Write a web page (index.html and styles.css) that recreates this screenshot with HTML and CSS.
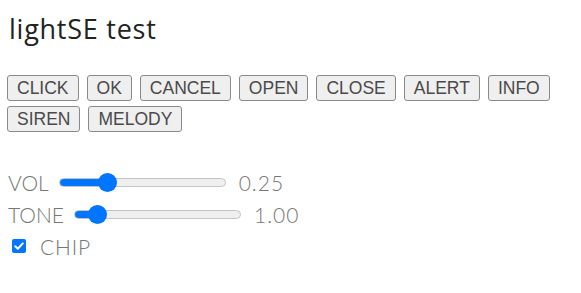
FILE: index.html
```html
<!DOCTYPE html>
<html>
<head>
<meta charset="utf-8">
<link rel="stylesheet" href="styles.css">
</head>
<body>
<h1 class="title">lightSE test</h1>
<div class="buttons">
  <button class="btn">CLICK</button>
  <button class="btn">OK</button>
  <button class="btn">CANCEL</button>
  <button class="btn">OPEN</button>
  <button class="btn">CLOSE</button>
  <button class="btn">ALERT</button>
  <button class="btn">INFO</button>
  <button class="btn">SIREN</button>
  <button class="btn">MELODY</button>
</div>
<div class="controls">
  <label class="row">
    <span class="lbl">VOL</span>
    <input class="slider" type="range" min="0" max="1" step="0.01" value="0.26" style="--p:26%">
    <span class="val">0.25</span>
  </label>
  <label class="row">
    <span class="lbl">TONE</span>
    <input class="slider" type="range" min="0" max="1" step="0.01" value="0.09" style="--p:9%">
    <span class="val">1.00</span>
  </label>
  <label class="row chip">
    <span class="box"><svg viewBox="0 0 14 14" width="14" height="14"><path d="M3.2 7.2 L5.8 9.8 L10.8 4.4" fill="none" stroke="#fff" stroke-width="2" stroke-linecap="round" stroke-linejoin="round"/></svg></span>
    <span class="lbl chip-text">CHIP</span>
  </label>
</div>
</body>
</html>
```

FILE: styles.css
```css
html, body {
  margin: 0;
  padding: 0;
  background: #fff;
}
body {
  padding: 0 10px 0 7px;
}
.title {
  margin: 0;
  padding: 12px 0 0 2px;
  font-family: "Open Sans", "Noto Sans", sans-serif;
  font-weight: 400;
  font-size: 27px;
  line-height: 34px;
  letter-spacing: 0.75px;
  color: #222;
}
.buttons {
  display: flex;
  flex-wrap: wrap;
  gap: 5px 8px;
  margin-top: 29px;
  width: 560px;
}
.btn {
  font-family: "Liberation Sans", Arial, sans-serif;
  font-size: 17.5px;
  color: #4a4a4a;
  background: #efefef;
  border: 1.25px solid #8a8a8a;
  border-radius: 3px;
  height: 26px;
  padding: 0 9px;
  line-height: 22px;
}
.controls {
  margin-top: 34px;
  display: flex;
  flex-direction: column;
  padding-left: 1px;
}
.row {
  display: flex;
  align-items: center;
  height: 32px;
  gap: 10px;
}
.lbl, .val {
  font-family: Lato, "Open Sans", sans-serif;
  font-weight: 300;
  font-size: 21px;
  color: #777;
}
.val {
  margin-left: 3px;
  letter-spacing: 1px;
}
.slider {
  -webkit-appearance: none;
  appearance: none;
  margin: 0;
  width: 167px;
  height: 9px;
  border-radius: 5px;
  border: 1px solid #c4c4c4;
  background: linear-gradient(to right, #0075ff var(--p), #efefef var(--p));
  box-sizing: border-box;
}
.slider::-webkit-slider-thumb {
  -webkit-appearance: none;
  appearance: none;
  width: 19px;
  height: 19px;
  border-radius: 50%;
  background: #0075ff;
  border: none;
}
.chip {
  gap: 14px;
  padding-left: 4px;
}
.chip-text {
  letter-spacing: 0.8px;
}
.box {
  width: 14px;
  height: 14px;
  border-radius: 2px;
  background: #0075ff;
  display: flex;
}
```
